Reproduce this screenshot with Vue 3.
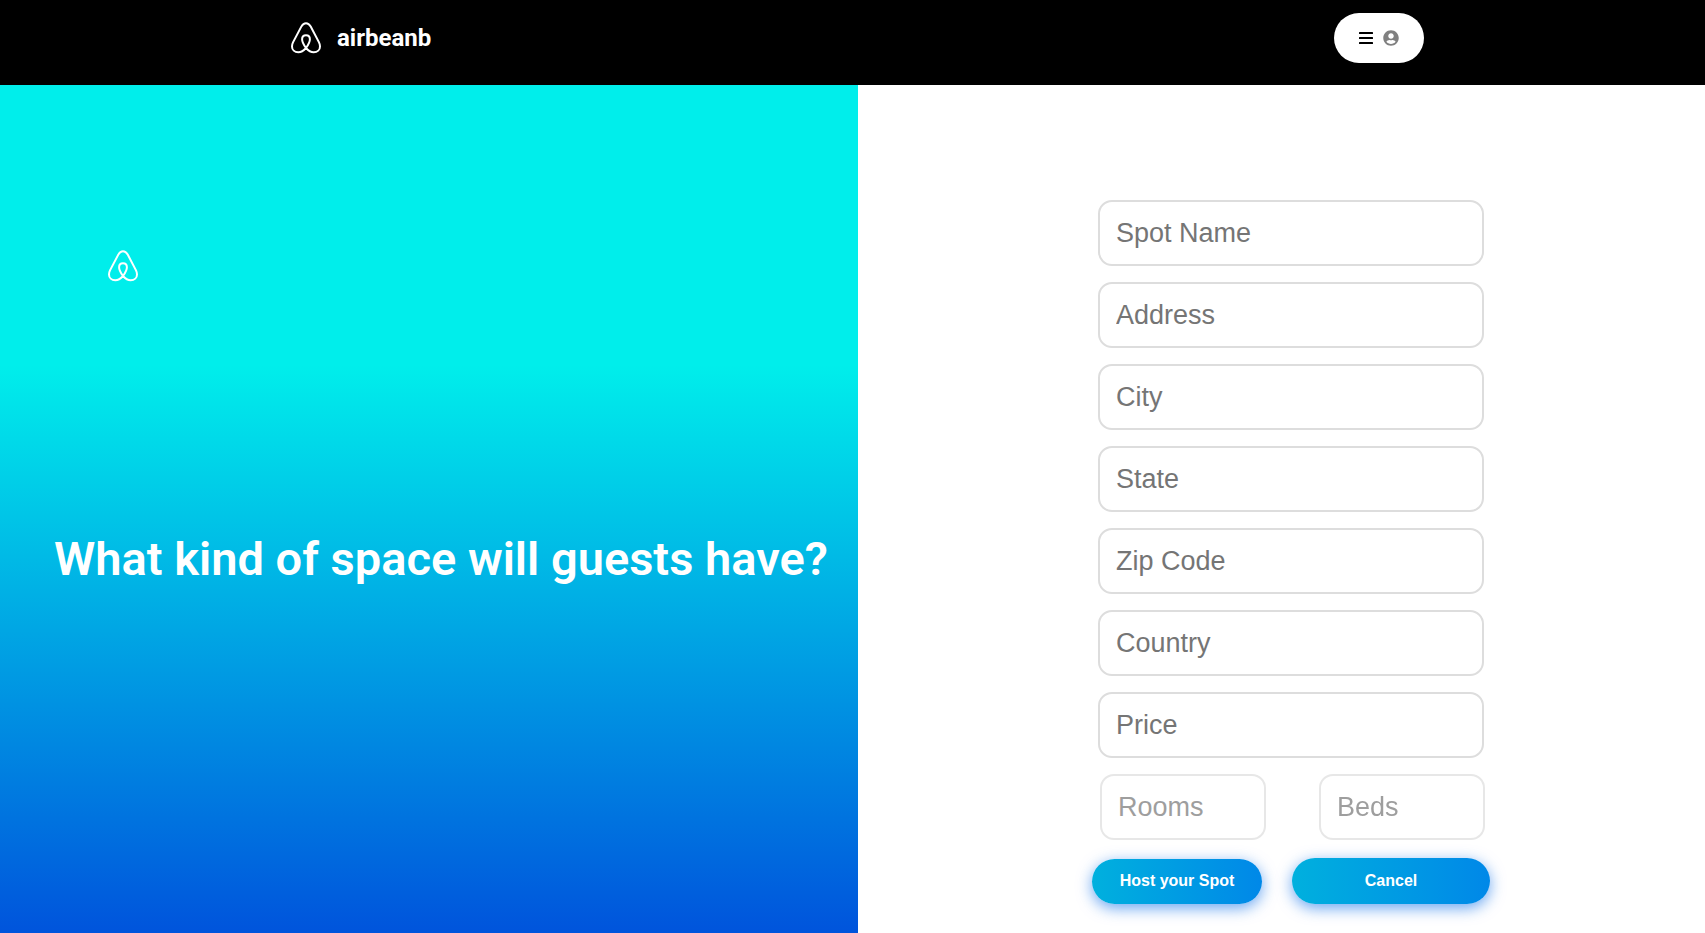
<script setup>
import { reactive } from 'vue'

const fields = [
  { key: 'name', label: 'Spot Name' },
  { key: 'address', label: 'Address' },
  { key: 'city', label: 'City' },
  { key: 'state', label: 'State' },
  { key: 'zip', label: 'Zip Code' },
  { key: 'country', label: 'Country' },
  { key: 'price', label: 'Price' },
]
const counts = [
  { key: 'rooms', label: 'Rooms' },
  { key: 'beds', label: 'Beds' },
]
const spot = reactive({
  name: '', address: '', city: '', state: '', zip: '', country: '', price: '', rooms: '', beds: '',
})
const logoPath =
  'M16 26C13.600 22.800 12.100 20 12.100 17.300C12.100 14.800 13.700 13.200 16 13.200C18.300 13.200 19.900 14.800 19.900 17.300C19.900 20 18.400 22.800 16 26C13.600 28.700 11 30.200 8.300 30.200C4.600 30.200 2 27.700 2 24.400C2 23 2.300 21.900 3 20.400L11.300 4.600C12.600 2.200 14 1.200 16 1.200C18 1.200 19.400 2.200 20.700 4.600L29 20.400C29.700 21.900 30 23 30 24.400C30 27.700 27.400 30.200 23.700 30.200C21 30.200 18.400 28.700 16 26Z'
</script>

<template>
  <div class="page">
    <header class="topbar">
      <a class="brand" href="#">
        <svg class="logo" viewBox="0 0 32 32" aria-hidden="true"><path :d="logoPath" /></svg>
        <span>airbeanb</span>
      </a>
      <button class="menu" type="button" aria-label="Account menu">
        <svg class="bars" viewBox="0 0 14 12" aria-hidden="true">
          <rect width="14" height="2" rx=".5" />
          <rect y="5" width="14" height="2" rx=".5" />
          <rect y="10" width="14" height="2" rx=".5" />
        </svg>
        <svg class="user" viewBox="0 0 496 512" aria-hidden="true">
          <path d="M248 8C111 8 0 119 0 256s111 248 248 248 248-111 248-248S385 8 248 8zm0 96c48.600 0 88 39.400 88 88s-39.400 88-88 88-88-39.400-88-88 39.400-88 88-88zm0 344c-58.700 0-111.300-26.600-146.500-68.200 18.800-35.400 55.600-59.800 98.500-59.800 2.400 0 4.800.4 7.100 1.100 13 4.200 26.600 6.900 40.900 6.900 14.300 0 28-2.700 40.900-6.900 2.300-.7 4.700-1.100 7.100-1.100 42.900 0 79.700 24.400 98.500 59.800C359.300 421.400 306.700 448 248 448z" />
        </svg>
      </button>
    </header>
    <main class="content">
      <section class="hero">
        <a class="hero-logo" href="#" aria-label="airbeanb home">
          <svg class="logo" viewBox="0 0 32 32" aria-hidden="true"><path :d="logoPath" /></svg>
        </a>
        <h1>What kind of space will guests have?</h1>
      </section>
      <section class="panel">
        <form class="form" @submit.prevent>
          <div class="fields">
            <input v-for="f in fields" :key="f.key" v-model="spot[f.key]" type="text" :placeholder="f.label" :aria-label="f.label" />
          </div>
          <div class="counts">
            <input v-for="c in counts" :key="c.key" v-model="spot[c.key]" type="text" :placeholder="c.label" :aria-label="c.label" />
          </div>
          <div class="actions">
            <button class="host" type="submit">Host your Spot</button>
            <button class="cancel" type="button">Cancel</button>
          </div>
        </form>
      </section>
    </main>
  </div>
</template>

<style>
body {
  margin: 0;
}
</style>

<style scoped>
* {
  box-sizing: border-box;
}
.page {
  display: flex;
  flex-direction: column;
  min-height: 100vh;
  background: #fff;
  font-family: Roboto, "Liberation Sans", sans-serif;
}
.topbar {
  display: flex;
  justify-content: space-between;
  align-items: center;
  height: 85px;
  padding: 0 281px 9px 290px;
  background: #000;
}
.brand {
  display: flex;
  align-items: center;
  gap: 15px;
  color: #fff;
  font-size: 24px;
  font-weight: 700;
  line-height: 32px;
  text-decoration: none;
}
.logo {
  display: block;
  width: 32px;
  height: 32px;
  fill: none;
  stroke: #fff;
  stroke-width: 2;
}
.menu {
  display: flex;
  align-items: center;
  justify-content: center;
  gap: 10px;
  width: 90px;
  height: 50px;
  padding: 0;
  border: 0;
  border-radius: 25px;
  background: #fff;
}
.bars {
  width: 14px;
  height: 12px;
}
.user {
  width: 16px;
  height: 16px;
  fill: #808080;
}
.content {
  flex: 1;
  display: grid;
  grid-template-columns: minmax(0, 858fr) minmax(0, 847fr);
}
.hero {
  padding: 165px 35px 0 54px;
  background: linear-gradient(#00eeeb 33%, #0054dc);
}
.hero-logo {
  display: block;
  width: 32px;
  margin-left: 53px;
}
h1 {
  margin: 247px 0 0;
  color: #fff;
  font-size: 47px;
  font-weight: 600;
  line-height: 60px;
  white-space: nowrap;
}
.panel {
  display: flex;
  justify-content: center;
  padding: 115px 0 29px 19px;
}
.form {
  width: 398px;
}
.fields {
  display: grid;
  gap: 16px;
  padding: 0 6px;
}
.counts {
  display: flex;
  justify-content: space-between;
  gap: 53px;
  margin-top: 16px;
  padding: 0 5px 0 8px;
  opacity: .7;
}
input {
  width: 100%;
  min-width: 0;
  height: 66px;
  padding: 0 16px;
  border: 2px solid #ddd;
  border-radius: 14px;
  background: #fff;
  font: 27px "Liberation Sans", Arial, sans-serif;
}
input::placeholder {
  color: #757575;
  opacity: 1;
}
.actions {
  display: flex;
  justify-content: space-between;
  align-items: flex-end;
  margin-top: 18px;
}
.actions button {
  padding: 0;
  border: 0;
  border-radius: 23px;
  background: linear-gradient(to right, #00b0de, #0088e8);
  box-shadow: 0 4px 15px rgba(0, 104, 232, .6);
  color: #fff;
  font: bold 16px "Liberation Sans", Arial, sans-serif;
}
.actions .host {
  width: 170px;
  height: 45px;
  padding-bottom: 2px;
}
.actions .cancel {
  width: 198px;
  height: 46px;
}
</style>
